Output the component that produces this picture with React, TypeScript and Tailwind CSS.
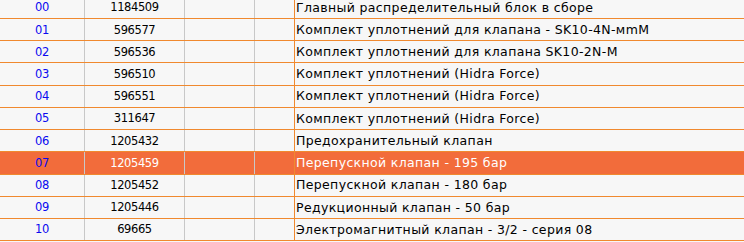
import React from "react";

const rows: [string, string, string][] = [
  ["00", "1184509", "Главный распределительный блок в сборе"],
  ["01", "596577", "Комплект уплотнений для клапана - SK10-4N-мmM"],
  ["02", "596536", "Комплект уплотнений для клапана SK10-2N-M"],
  ["03", "596510", "Комплект уплотнений (Hidra Force)"],
  ["04", "596551", "Комплект уплотнений (Hidra Force)"],
  ["05", "311647", "Комплект уплотнений (Hidra Force)"],
  ["06", "1205432", "Предохранительный клапан"],
  ["07", "1205459", "Перепускной клапан - 195 бар"],
  ["08", "1205452", "Перепускной клапан - 180 бар"],
  ["09", "1205446", "Редукционный клапан - 50 бар"],
  ["10", "69665", "Электромагнитный клапан - 3/2 - серия 08"],
];

export default function App() {
  return (
    <div
      className="w-[744px] h-[242px] overflow-hidden bg-[#f7f7f7] text-[11.5px] text-black"
      style={{ fontFamily: '"DejaVu Sans", Verdana, sans-serif' }}
    >
      <div className="-mt-[3.2px]">
        {rows.map(([n, code, desc], i) => {
          const hi = i === 7;
          return (
            <div
              key={n}
              className={`flex h-[22.222px] border-b border-[#f0892f] ${hi ? "bg-[#f26c3b]" : ""}`}
            >
              <div className="w-[85px] shrink-0 flex items-center justify-center pt-[1px] border-r border-[#c8c8c8] text-[#0a0af0] tracking-[-0.4px]">
                {n}
              </div>
              <div className={`w-[100px] shrink-0 flex items-center justify-center pt-[1px] border-r border-[#c8c8c8] tracking-[-0.4px] ${hi ? "text-white" : ""}`}>
                {code}
              </div>
              <div className="w-[70px] shrink-0 border-r border-[#c8c8c8]" />
              <div className="w-[40px] shrink-0 border-r border-[#f0892f]" />
              <div className={`flex-1 flex items-center pl-[1px] pt-[1px] whitespace-nowrap text-[12.5px] tracking-[0.35px] ${hi ? "text-white" : ""}`}>
                {desc}
              </div>
            </div>
          );
        })}
      </div>
    </div>
  );
}
